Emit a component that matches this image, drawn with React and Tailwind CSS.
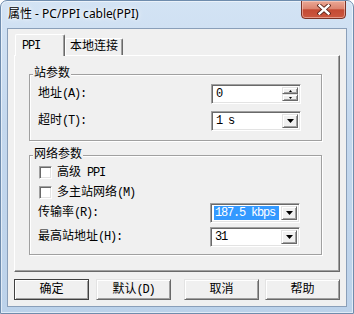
import React from "react";

const sunken =
  "border border-t-[#a0a0a0] border-l-[#a0a0a0] border-r-white border-b-white shadow-[inset_1px_1px_0_#696969,inset_-1px_-1px_0_#e3e3e3]";
const raised =
  "border border-t-[#e3e3e3] border-l-[#e3e3e3] border-r-[#696969] border-b-[#696969] shadow-[inset_1px_1px_0_#fff,inset_-1px_-1px_0_#a0a0a0] bg-[#f0f0f0]";

// latin runs get squeezed to half-width cells like the old bitmap font
function T({ children }) {
  const parts = String(children).split(/([\u3000-\u9fff]+)/);
  return (
    <span className="whitespace-nowrap">
      {parts.map((p, i) =>
        /[\u3000-\u9fff]/.test(p) ? (
          <span key={i}>{p}</span>
        ) : (
          <span key={i} className="tracking-[-1.2px]">
            {p}
          </span>
        )
      )}
    </span>
  );
}

function Arrow({ up = false, w = 7 }) {
  const h = Math.ceil(w / 2);
  return (
    <svg width={w} height={h} viewBox={`0 0 ${w} ${h}`} className="block">
      <polygon
        points={up ? `0,${h} ${w},${h} ${w / 2},0` : `0,0 ${w},0 ${w / 2},${h}`}
        fill="#000"
      />
    </svg>
  );
}

function Combo({ value, selected = false }) {
  return (
    <div className={`w-[90px] h-[20px] flex items-stretch bg-white p-[2px] ${sunken}`}>
      <div className="flex-1 flex items-center pl-[1px] pr-[2px]">
        <span
          className={
            selected
              ? "bg-[#3399ff] text-white w-full h-full flex items-center pl-[1px]"
              : "pl-[1px]"
          }
        >
          <T>{value}</T>
        </span>
      </div>
      <div className={`w-[16px] flex items-center justify-center ${raised}`}>
        <Arrow />
      </div>
    </div>
  );
}

function Spin({ value }) {
  return (
    <div className={`w-[90px] h-[20px] flex items-stretch bg-white p-[2px] ${sunken}`}>
      <div className="flex-1 flex items-center pl-[2px]">
        <T>{value}</T>
      </div>
      <div className="w-[16px] flex flex-col">
        <div className={`flex-1 flex items-center justify-center ${raised}`}>
          <Arrow up w={3} />
        </div>
        <div className={`flex-1 flex items-center justify-center ${raised}`}>
          <Arrow w={3} />
        </div>
      </div>
    </div>
  );
}

function Check({ label }) {
  return (
    <div className="h-[13px] flex items-center gap-[5px] pl-[9px]">
      <div className={`w-[13px] h-[13px] bg-white ${sunken}`} />
      <T>{label}</T>
    </div>
  );
}

function Group({ title, children, className = "" }) {
  return (
    <fieldset
      className={`w-[293px] border border-[#a0a0a0] shadow-[inset_1px_1px_0_#fff,1px_1px_0_#fff] ${className}`}
    >
      <legend className="ml-[3px] px-[1px] bg-[#f0f0f0] leading-[14px]">{title}</legend>
      {children}
    </fieldset>
  );
}

function Btn({ children, isDefault = false, className = "" }) {
  return (
    <button
      className={`w-[75px] h-[21px] flex items-center justify-center ${raised} ${
        isDefault ? "outline outline-1 outline-[#404040] -outline-offset-1" : ""
      } ${className}`}
    >
      <T>{children}</T>
    </button>
  );
}

export default function App() {
  return (
    <div className="w-[354px] h-[314px] flex flex-col rounded-t-[7px] border border-[#6f8cad] bg-[linear-gradient(180deg,#d3e3f4_0%,#c4d8ee_40%,#bcd2ea_100%)] shadow-[inset_0_0_0_1px_rgba(255,255,255,0.55)] overflow-hidden">
      <div className="h-[27px] flex items-start pl-[7px] pr-[7px] font-['Noto_Sans','Noto_Sans_CJK_SC',sans-serif] text-[12px] leading-[16px] text-black">
        <span className="mt-[5px] [text-shadow:0_0_6px_#fff,0_0_3px_#fff]">属性 - PC/PPI cable(PPI)</span>
        <div className="ml-auto w-[45px] h-[19px] -mt-px rounded-b-[4px] border border-[#7b3326] bg-[linear-gradient(180deg,#eba895_0%,#dc8570_45%,#c44a33_52%,#cc5840_100%)] shadow-[inset_0_0_0_1px_rgba(255,220,210,0.5)] flex items-center justify-center">
          <svg width="14" height="11" viewBox="0 0 14 11">
            <path d="M2.5 1.5 L11.5 9.5 M11.5 1.5 L2.5 9.5" stroke="#5b2318" strokeWidth="4.2" strokeLinecap="square" />
            <path d="M2.5 1.5 L11.5 9.5 M11.5 1.5 L2.5 9.5" stroke="#fff" strokeWidth="2.4" strokeLinecap="square" />
          </svg>
        </div>
      </div>

      <div className="mx-[6px] h-[279px] border border-[#8a9fb9] bg-[#f0f0f0] flex flex-col font-['Liberation_Mono','Noto_Sans_CJK_SC',monospace] text-[12px] leading-[14px] text-black">
        <div className="mt-[5px] ml-[7px] h-[21px] flex items-end relative z-10">
          <div className="w-[50px] h-[22px] -mb-px bg-[#f0f0f0] rounded-t-[2px] border-l border-t border-r border-l-white border-t-white border-r-[#696969] shadow-[inset_-1px_0_0_#a0a0a0] flex items-start justify-start pt-[4px] pl-[6px]">
            <T>PPI</T>
          </div>
          <div className="w-[58px] h-[17px] bg-[#f0f0f0] rounded-t-[2px] border-l border-t border-r border-l-white border-t-white border-r-[#696969] shadow-[inset_-1px_0_0_#a0a0a0] flex items-center justify-center">
            本地连接
          </div>
        </div>

        <div className="ml-[6px] w-[326px] h-[217px] border border-t-white border-l-white border-r-[#696969] border-b-[#696969] shadow-[inset_-1px_-1px_0_#a0a0a0] pt-[11px] pl-[14px]">
          <Group title="站参数">
            <div className="mt-[3px] h-[20px] flex items-center justify-between pl-[8px] pr-[20px]">
              <T>地址(A):</T>
              <Spin value="0" />
            </div>
            <div className="mt-[7px] mb-[9px] h-[20px] flex items-center justify-between pl-[8px] pr-[20px]">
              <T>超时(T):</T>
              <Combo value="1 s" />
            </div>
          </Group>

          <Group title="网络参数" className="mt-[7px]">
            <div className="mt-[4px]">
              <Check label="高级 PPI" />
            </div>
            <div className="mt-[7px]">
              <Check label="多主站网络(M)" />
            </div>
            <div className="mt-[4px] h-[20px] flex items-center justify-between pl-[8px] pr-[21px]">
              <T>传输率(R):</T>
              <Combo value="187.5 kbps" selected />
            </div>
            <div className="mt-[4px] mb-[7px] h-[20px] flex items-center justify-between pl-[8px] pr-[21px]">
              <T>最高站地址(H):</T>
              <Combo value="31" />
            </div>
          </Group>
        </div>

        <div className="mt-[7px] ml-[6px] flex">
          <Btn isDefault>确定</Btn>
          <Btn className="ml-[7px]">默认(D)</Btn>
          <Btn className="ml-[13px]">取消</Btn>
          <Btn className="ml-[6px]">帮助</Btn>
        </div>
      </div>
    </div>
  );
}
